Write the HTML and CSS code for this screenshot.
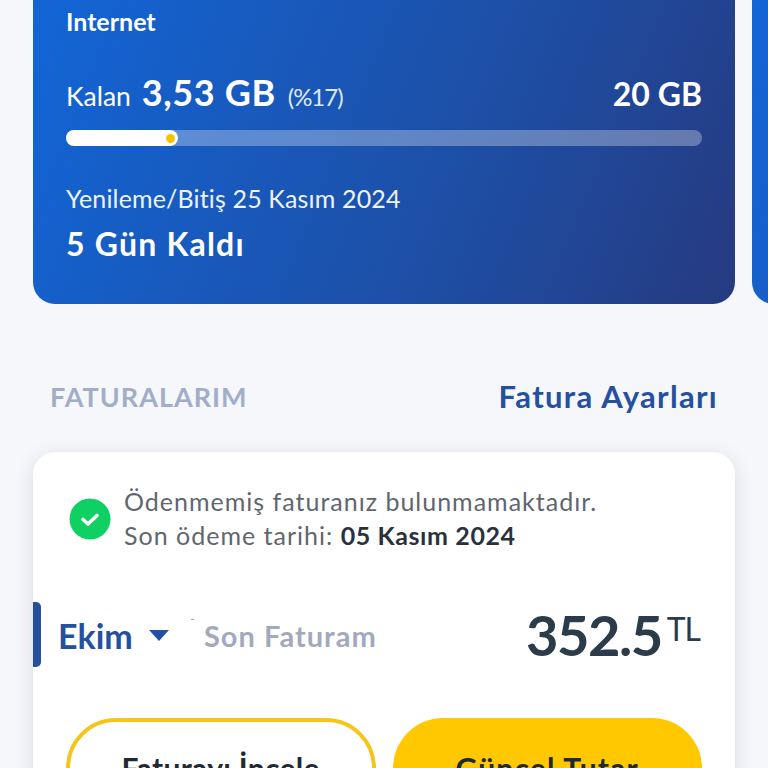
FILE: index.html
```html
<!doctype html>
<html lang="tr">

	<head>
		<meta charset="utf-8">
		<title>Faturalarım</title>
		<link rel="stylesheet" href="styles.css">
	</head>

	<body>
		<div class="screen">
			<!-- kalan internet -->
			<div class="slider">
				<div class="usage">
					<div class="usage-title">Internet</div>
					<div class="usage-row">
						<div class="usage-left">
							<span class="usage-label">Kalan</span>
							<span class="usage-value">3,53 GB</span>
							<span class="usage-percent">(%17)</span>
						</div>
						<div class="usage-total">20 GB</div>
					</div>
					<div class="bar">
						<div class="bar-fill" style="width: 17.6%"><span class="bar-dot"></span></div>
					</div>
					<div class="usage-date">Yenileme/Bitiş 25 Kasım 2024</div>
					<div class="usage-days">5 Gün Kaldı</div>
				</div>
				<div class="usage usage-next"></div>
			</div>

			<div class="section-head">
				<div class="section-title">FATURALARIM</div>
				<div class="section-link">Fatura Ayarları</div>
			</div>

			<!-- fatura kartı -->
			<div class="bill">
				<div class="notice">
					<svg class="notice-icon" viewBox="0 0 42 42">
						<circle cx="21" cy="21" r="20.5" fill="#0fd163" />
						<path d="M14 21.5l5 4.5 9-8.5" fill="none" stroke="#fff" stroke-width="3.6" stroke-linecap="round" stroke-linejoin="round" />
					</svg>
					<div class="notice-text">
						<div>Ödenmemiş faturanız bulunmamaktadır.</div>
						<div>Son ödeme tarihi: <b>05 Kasım 2024</b></div>
					</div>
				</div>

				<div class="bill-row">
					<div class="bill-month">
						<span>Ekim</span>
						<span class="caret"></span>
					</div>
					<div class="bill-label">Son Faturam</div>
					<div class="bill-amount">352.5<span class="bill-unit">TL</span></div>
				</div>

				<div class="actions">
					<div class="btn btn-outline">Faturayı İncele</div>
					<div class="btn btn-solid">Güncel Tutar</div>
				</div>
			</div>
		</div>
	</body>

</html>
```

FILE: styles.css
```css
html,
body {
	margin: 0;
	height: 100%;
}

body {
	background: #f5f7fa;
	font-family: "Lato", "Liberation Sans", sans-serif;
	overflow: hidden;
}

.screen {
	width: 768px;
	height: 768px;
	overflow: hidden;
}

.slider {
	display: flex;
	gap: 17px;
	margin-top: -30px;
	padding-left: 33px;
}

.usage {
	flex: none;
	width: 702px;
	height: 334px;
	box-sizing: border-box;
	padding: 37px 33px 0;
	border-radius: 22px;
	background: linear-gradient(112deg, #1266d8 0%, #1d4fa6 60%, #263a80 100%);
	color: #fff;
}

.usage-next {
	padding: 0;
}

.usage-title {
	font-size: 25px;
	line-height: 28px;
	font-weight: 700;
}

.usage-row {
	display: flex;
	justify-content: space-between;
	align-items: baseline;
	margin-top: 35px;
	height: 44px;
}

.usage-left {
	display: flex;
	align-items: baseline;
}

.usage-label {
	font-size: 26.5px;
}

.usage-value {
	margin-left: 11px;
	font-size: 36px;
	line-height: 44px;
	font-weight: 700;
	letter-spacing: 0.6px;
}

.usage-percent {
	margin-left: 12px;
	font-size: 24px;
	letter-spacing: -1px;
	color: #dfe8f6;
}

.usage-total {
	font-size: 32px;
	font-weight: 700;
}

.bar {
	height: 16px;
	margin-top: 16px;
	border-radius: 8px;
	background: rgba(255, 255, 255, 0.3);
}

.bar-fill {
	display: flex;
	justify-content: flex-end;
	align-items: center;
	height: 100%;
	padding-right: 3px;
	box-sizing: border-box;
	border-radius: 8px;
	background: #fff;
}

.bar-dot {
	width: 9px;
	height: 9px;
	border-radius: 50%;
	background: #f5c400;
}

.usage-date {
	margin-top: 36px;
	font-size: 25px;
	line-height: 32px;
	letter-spacing: 0.15px;
	color: #eef3fb;
}

.usage-days {
	margin-top: 12px;
	font-size: 32px;
	line-height: 36px;
	font-weight: 700;
	letter-spacing: 1.2px;
}

.section-head {
	display: flex;
	justify-content: space-between;
	align-items: center;
	margin-top: 75px;
	padding: 0 50px;
	height: 34px;
}

.section-title {
	font-size: 27px;
	font-weight: 700;
	letter-spacing: 1px;
	color: #a2aec7;
}

.section-link {
	font-size: 31px;
	font-weight: 700;
	letter-spacing: 1.3px;
	color: #24509f;
}

.bill {
	width: 702px;
	height: 400px;
	margin: 39px 0 0 33px;
	box-sizing: border-box;
	padding-top: 32px;
	border-radius: 22px;
	background: #fff;
	box-shadow: 0 4px 18px rgba(60, 70, 100, 0.16);
}

.notice {
	display: flex;
	align-items: center;
	gap: 13px;
	padding-left: 36px;
}

.notice-icon {
	flex: none;
	width: 42px;
	height: 42px;
	margin-top: 2px;
}

.notice-text {
	font-size: 25px;
	line-height: 34px;
	letter-spacing: 1px;
	color: #5f6670;
}

.notice-text b {
	font-weight: 700;
	letter-spacing: 0.6px;
	color: #29323c;
}

.bill-row {
	position: relative;
	display: flex;
	align-items: center;
	height: 64px;
	box-sizing: border-box;
	margin-top: 50px;
	padding: 2px 35px 0 25px;
}

.bill-row::before {
	content: "";
	position: absolute;
	left: 0;
	top: 0;
	width: 8px;
	height: 65px;
	border-radius: 0 5px 5px 0;
	background: #24509f;
}

/* referanstaki küçük leke */
.bill-row::after {
	content: "";
	position: absolute;
	left: 158px;
	top: 17px;
	width: 3px;
	height: 1px;
	background: #a2a9bd;
}

.bill-month {
	display: flex;
	align-items: center;
	gap: 16px;
	width: 146px;
	font-size: 34px;
	font-weight: 700;
	color: #24509f;
}

.caret {
	width: 0;
	height: 0;
	border-left: 10px solid transparent;
	border-right: 10px solid transparent;
	border-top: 11px solid #24509f;
}

.bill-label {
	font-size: 29px;
	font-weight: 700;
	letter-spacing: 1px;
	color: #a2a9bd;
}

.bill-amount {
	margin-left: auto;
	display: flex;
	align-items: flex-start;
	font-size: 56px;
	line-height: 64px;
	font-weight: 700;
	letter-spacing: -1.5px;
	color: #2b3b49;
}

.bill-unit {
	margin: 8px 0 0 5px;
	font-size: 32px;
	line-height: 36px;
	font-weight: 400;
	letter-spacing: -1px;
}

.actions {
	display: grid;
	grid-template-columns: 1fr 1fr;
	gap: 17px;
	margin-top: 52px;
	padding: 0 33px;
}

.btn {
	height: 100px;
	box-sizing: border-box;
	border-radius: 50px;
	padding-top: 33px;
	text-align: center;
	font-size: 30px;
	line-height: 34px;
	font-weight: 700;
	color: #1f2933;
	letter-spacing: 1.2px;
}

.btn-outline {
	padding-top: 29px;
	border: 4px solid #f5c518;
	letter-spacing: 0.3px;
}

.btn-solid {
	background: #ffc800;
}
```
